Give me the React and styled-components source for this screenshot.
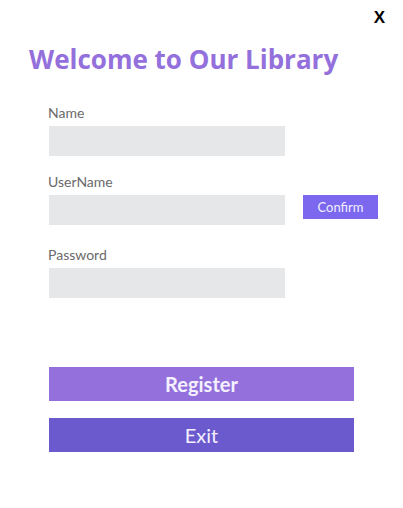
import styled, { createGlobalStyle } from "styled-components";

const GlobalStyle = createGlobalStyle`
  body {
    margin: 0;
    background: #ffffff;
  }
`;

const Page = styled.div`
  width: 403px;
  height: 508px;
  display: flex;
  flex-direction: column;
  box-sizing: border-box;
  padding: 8px 18px 0 29px;
  font-family: "Lato", "Open Sans", sans-serif;
`;

const TopBar = styled.div`
  display: flex;
  justify-content: flex-end;
`;

const CloseButton = styled.button`
  border: none;
  background: none;
  padding: 0;
  font-family: "Liberation Sans", Arial, sans-serif;
  font-weight: 700;
  font-size: 17px;
  color: #000;
  cursor: pointer;
`;

const Title = styled.h1`
  margin: 14px 0 0 0;
  font-family: "Open Sans", sans-serif;
  font-weight: 700;
  font-size: 26px;
  line-height: 34px;
  color: #9370db;
`;

const Form = styled.div`
  display: flex;
  flex-direction: column;
  padding-left: 19px;
  margin-top: 28px;
`;

const Field = styled.div`
  display: flex;
  flex-direction: column;
  margin-bottom: ${(p) => p.$gap || 0}px;
`;

const Label = styled.label`
  font-size: 14px;
  line-height: 18px;
  color: #6a6a6a;
  height: 22px;
`;

const Row = styled.div`
  display: flex;
  align-items: flex-start;
  gap: 18px;
`;

const Input = styled.input`
  width: 236px;
  height: 30px;
  margin-left: 1px;
  box-sizing: border-box;
  border: none;
  background: #e6e7e8;
  padding: 0 4px;
  font-size: 14px;
  outline: none;
  caret-color: #000;
`;

const ConfirmButton = styled.button`
  width: 75px;
  height: 24px;
  border: none;
  background: #7b68ee;
  color: #f2efff;
  font-family: "Lato", sans-serif;
  font-size: 13px;
  padding: 0;
`;

const Actions = styled.div`
  display: flex;
  flex-direction: column;
  gap: 17px;
  margin-top: 69px;
  padding-left: 20px;
`;

const ActionButton = styled.button`
  width: 305px;
  height: 34px;
  border: none;
  padding: 0;
  background: ${(p) => p.$bg};
  color: #f4f0ff;
  font-family: "Lato", sans-serif;
  font-size: 20px;
  font-weight: ${(p) => (p.$bold ? 700 : 400)};
`;

export default function App() {
  return (
    <>
      <GlobalStyle />
      <Page>
        <TopBar>
          <CloseButton>X</CloseButton>
        </TopBar>
        <Title>Welcome to Our Library</Title>
        <Form>
          <Field $gap={17}>
            <Label>Name</Label>
            <Input autoFocus />
          </Field>
          <Field $gap={21}>
            <Label>UserName</Label>
            <Row>
              <Input />
              <ConfirmButton>Confirm</ConfirmButton>
            </Row>
          </Field>
          <Field>
            <Label>Password</Label>
            <Input type="password" />
          </Field>
        </Form>
        <Actions>
          <ActionButton $bg="#9370db" $bold>
            Register
          </ActionButton>
          <ActionButton $bg="#6a5acd">Exit</ActionButton>
        </Actions>
      </Page>
    </>
  );
}
